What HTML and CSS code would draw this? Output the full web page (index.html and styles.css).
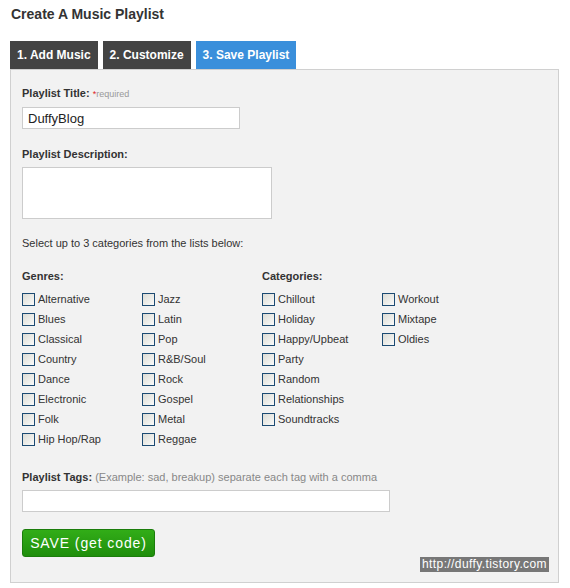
FILE: index.html
```html
<!DOCTYPE html>
<html lang="en">
<head>
    <meta charset="UTF-8">
    <title>Create A Music Playlist</title>
    <link rel="stylesheet" href="styles.css">
</head>
<body>
    <div class="wrap">
        <h1 class="page-title">Create A Music Playlist</h1>

        <!-- 步骤标签 -->
        <ul class="tabs">
            <li class="tab">1. Add Music</li>
            <li class="tab">2. Customize</li>
            <li class="tab active">3. Save Playlist</li>
        </ul>

        <form class="panel">
            <div class="field-label">Playlist Title: <span class="req"><em>*</em>required</span></div>
            <input class="text-input title-input" type="text" value="DuffyBlog">

            <div class="field-label gap">Playlist Description:</div>
            <textarea class="text-input desc-input"></textarea>

            <p class="hint-line">Select up to 3 categories from the lists below:</p>

            <div class="groups">
                <div class="group">
                    <div class="field-label">Genres:</div>
                    <div class="cols">
                        <div class="col">
                            <label class="check"><input type="checkbox">Alternative</label>
                            <label class="check"><input type="checkbox">Blues</label>
                            <label class="check"><input type="checkbox">Classical</label>
                            <label class="check"><input type="checkbox">Country</label>
                            <label class="check"><input type="checkbox">Dance</label>
                            <label class="check"><input type="checkbox">Electronic</label>
                            <label class="check"><input type="checkbox">Folk</label>
                            <label class="check"><input type="checkbox">Hip Hop/Rap</label>
                        </div>
                        <div class="col">
                            <label class="check"><input type="checkbox">Jazz</label>
                            <label class="check"><input type="checkbox">Latin</label>
                            <label class="check"><input type="checkbox">Pop</label>
                            <label class="check"><input type="checkbox">R&amp;B/Soul</label>
                            <label class="check"><input type="checkbox">Rock</label>
                            <label class="check"><input type="checkbox">Gospel</label>
                            <label class="check"><input type="checkbox">Metal</label>
                            <label class="check"><input type="checkbox">Reggae</label>
                        </div>
                    </div>
                </div>
                <div class="group">
                    <div class="field-label">Categories:</div>
                    <div class="cols">
                        <div class="col">
                            <label class="check"><input type="checkbox">Chillout</label>
                            <label class="check"><input type="checkbox">Holiday</label>
                            <label class="check"><input type="checkbox">Happy/Upbeat</label>
                            <label class="check"><input type="checkbox">Party</label>
                            <label class="check"><input type="checkbox">Random</label>
                            <label class="check"><input type="checkbox">Relationships</label>
                            <label class="check"><input type="checkbox">Soundtracks</label>
                        </div>
                        <div class="col">
                            <label class="check"><input type="checkbox">Workout</label>
                            <label class="check"><input type="checkbox">Mixtape</label>
                            <label class="check"><input type="checkbox">Oldies</label>
                        </div>
                    </div>
                </div>
            </div>

            <div class="field-label tags-label">Playlist Tags: <span class="tip">(Example: sad, breakup) separate each tag with a comma</span></div>
            <input class="text-input tags-input" type="text">

            <button class="save-btn" type="button">SAVE (get code)</button>

            <!-- 水印 -->
            <span class="watermark">http://duffy.tistory.com</span>
        </form>
    </div>
</body>
</html>
```

FILE: styles.css
```css
html,body{
    margin: 0;
    padding: 0;
    background: #fff;
    font-family: "Liberation Sans", Arial, sans-serif;
    color: #333;
}
.wrap{
    padding: 5px 0 0 11px;
    width: 548px;
}
.page-title{
    margin: 0;
    font-size: 14px;
    line-height: 18px;
    font-weight: bold;
    color: #333;
}
/* 标签 */
.tabs{
    margin: 18px 0 0 -1px;
    padding: 0;
    list-style: none;
    display: flex;
    gap: 5px;
}
.tab{
    height: 28px;
    line-height: 29px;
    padding: 0 7px;
    background: #444;
    color: #fff;
    font-size: 12px;
    font-weight: bold;
}
.tab.active{
    background: #3a8fdb;
}
/* 表单面板 */
.panel{
    position: relative;
    margin: 0 0 0 -1px;
    border: 1px solid #d0d0d0;
    background: #f2f2f2;
    padding: 16px 11px 25px 11px;
    height: 471px;
}
.field-label{
    font-size: 11px;
    line-height: 14px;
    font-weight: bold;
    color: #333;
    margin-bottom: 6px;
}
.field-label.gap{
    margin-top: 18px;
}
.req{
    font-weight: normal;
    font-size: 9px;
    color: #999;
}
.req em{
    font-style: normal;
    color: #d22;
}
.text-input{
    display: block;
    box-sizing: border-box;
    margin: 0;
    border: 1px solid #ccc;
    background: #fff;
    font-family: "Liberation Sans", Arial, sans-serif;
    font-size: 13px;
    color: #222;
    padding: 0 5px;
}
.title-input{
    width: 218px;
    height: 22px;
}
.desc-input{
    width: 250px;
    height: 52px;
    resize: none;
}
.hint-line{
    margin: 17px 0 0;
    font-size: 11px;
    line-height: 14px;
    color: #333;
}
.groups{
    display: flex;
    margin-top: 19px;
}
.group{
    width: 240px;
}
.cols{
    display: flex;
}
.col{
    width: 120px;
    display: flex;
    flex-direction: column;
}
.check{
    display: flex;
    align-items: center;
    height: 20px;
    font-size: 11px;
    color: #333;
}
.check input{
    appearance: none;
    -webkit-appearance: none;
    box-sizing: border-box;
    width: 13px;
    height: 13px;
    margin: 0 3px 0 0;
    border: 1px solid #1c4a72;
    background: linear-gradient(135deg, #dcdcd6 0%, #eeeeea 60%, #fafafa 100%);
}
.tags-label{
    margin-top: 21px;
}
.tip{
    font-weight: normal;
    color: #888;
}
.tags-input{
    width: 368px;
    height: 22px;
}
.save-btn{
    display: block;
    margin-top: 17px;
    width: 133px;
    height: 28px;
    border: 1px solid #1b7d0b;
    border-radius: 3px;
    background: linear-gradient(#32ad18, #1f8e0c);
    color: #fff;
    font-family: "Liberation Sans", Arial, sans-serif;
    font-size: 14px;
    letter-spacing: 0.9px;
    padding: 0;
}
.watermark{
    position: absolute;
    right: 9px;
    bottom: 10px;
    background: #777;
    color: #fff;
    font-size: 12px;
    line-height: 15px;
    letter-spacing: 0.4px;
    padding: 0 2px;
}
```
